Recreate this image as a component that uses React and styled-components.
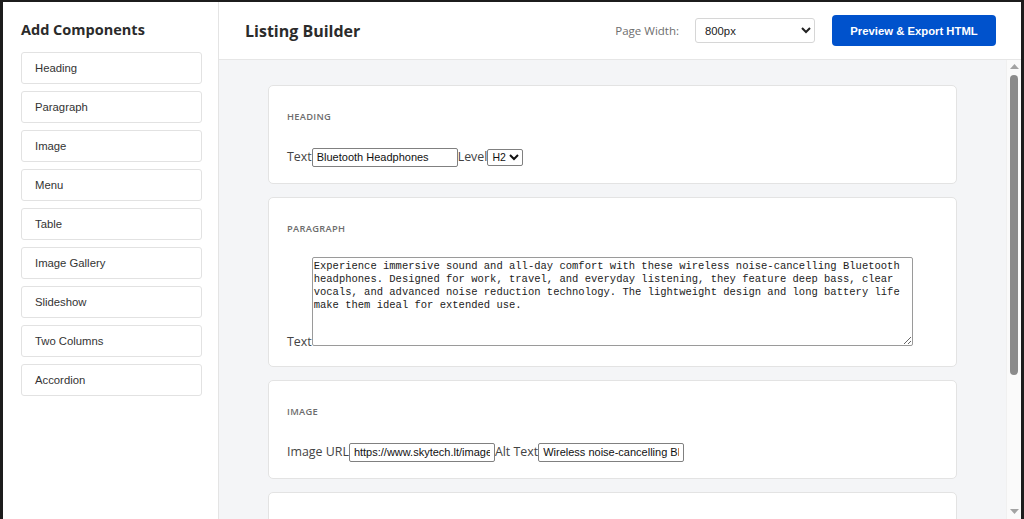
import { createGlobalStyle, styled } from "styled-components";

const GlobalStyle = createGlobalStyle`
    html, body {
        margin: 0;
        height: 100%;
        overflow: hidden;
        background: #1c1c1c;
    }
    #root {
        height: 100%;
    }
`;

const components = [
    "Heading",
    "Paragraph",
    "Image",
    "Menu",
    "Table",
    "Image Gallery",
    "Slideshow",
    "Two Columns",
    "Accordion",
];

const paragraph =
    "Experience immersive sound and all-day comfort with these wireless noise-cancelling Bluetooth headphones. Designed for work, travel, and everyday listening, they feature deep bass, clear vocals, and advanced noise reduction technology. The lightweight design and long battery life make them ideal for extended use.";

const Arrow = ({ down }) => (
    <svg width="9" height="5" viewBox="0 0 9 5">
        <path d={down ? "M0 0 L9 0 L4.5 5 Z" : "M0 5 L9 5 L4.5 0 Z"} fill="#a3a3a3" />
    </svg>
);

const App = () => {
    return (
        <>
            <GlobalStyle />
            <Shell>
                <Sidebar>
                    <SideTitle>Add Components</SideTitle>
                    <ComponentList>
                        {components.map((name) => (
                            <AddButton key={name}>{name}</AddButton>
                        ))}
                    </ComponentList>
                </Sidebar>

                <Main>
                    <Header>
                        <Title>Listing Builder</Title>
                        <Controls>
                            <WidthLabel>Page Width:</WidthLabel>
                            <WidthSelect defaultValue="800">
                                <option value="600">600px</option>
                                <option value="800">800px</option>
                                <option value="1000">1000px</option>
                            </WidthSelect>
                            <ExportButton>Preview &amp; Export HTML</ExportButton>
                        </Controls>
                    </Header>

                    <Canvas>
                        <ScrollArea>
                            <Stack>
                                <Card>
                                    <CardLabel>Heading</CardLabel>
                                    <Row>
                                        Text
                                        <Field defaultValue="Bluetooth Headphones" />
                                        Level
                                        <SmallSelect defaultValue="h2">
                                            <option value="h1">H1</option>
                                            <option value="h2">H2</option>
                                            <option value="h3">H3</option>
                                        </SmallSelect>
                                    </Row>
                                </Card>

                                <Card>
                                    <CardLabel>Paragraph</CardLabel>
                                    <Row $tight>
                                        Text
                                        <TextBox defaultValue={paragraph} />
                                    </Row>
                                </Card>

                                <Card>
                                    <CardLabel>Image</CardLabel>
                                    <Row>
                                        Image URL
                                        <Field defaultValue="https://www.skytech.lt/images/headphones.jpg" />
                                        Alt Text
                                        <Field defaultValue="Wireless noise-cancelling Bluetooth headphones" />
                                    </Row>
                                </Card>

                                <Card>
                                    <CardLabel>Menu</CardLabel>
                                    <Row>
                                        Label
                                        <Field defaultValue="Home" />
                                        Link
                                        <Field defaultValue="https://www.skytech.lt/" />
                                    </Row>
                                </Card>
                            </Stack>
                        </ScrollArea>

                        <ScrollTrack>
                            <Arrow />
                            <Thumb />
                            <Arrow down />
                        </ScrollTrack>
                    </Canvas>
                </Main>
            </Shell>
        </>
    );
};

const Shell = styled.div`
    display: flex;
    height: calc(100% - 2px);
    margin: 2px 3px 0 3px;
    background: #ffffff;
    font-family: "Open Sans", "Noto Sans", sans-serif;
    color: #333333;
`;

const Sidebar = styled.aside`
    width: 216px;
    flex-shrink: 0;
    border-right: 1px solid #e4e4e4;
    padding: 18px 18px 0 18px;
    box-sizing: border-box;
`;

const SideTitle = styled.h2`
    margin: 0 0 12px;
    font-size: 14.5px;
    line-height: 20px;
    font-weight: 700;
    color: #2b2b2b;
`;

const ComponentList = styled.div`
    display: flex;
    flex-direction: column;
    gap: 7px;
`;

const AddButton = styled.button`
    width: 181px;
    height: 32px;
    padding: 0 13px;
    text-align: left;
    background: #ffffff;
    border: 1px solid #e2e2e2;
    border-radius: 3px;
    font-family: "Liberation Sans", Arial, sans-serif;
    font-size: 11.3px;
    color: #333333;
    cursor: pointer;
`;

const Main = styled.div`
    flex: 1;
    display: flex;
    flex-direction: column;
    min-width: 0;
`;

const Header = styled.header`
    height: 57px;
    flex-shrink: 0;
    display: flex;
    align-items: center;
    justify-content: space-between;
    padding: 0 25px 0 26px;
    border-bottom: 1px solid #e6e6e6;
    background: #ffffff;
`;

const Title = styled.h1`
    margin: 0;
    font-size: 16px;
    font-weight: 700;
    color: #2b2b2b;
`;

const Controls = styled.div`
    display: flex;
    align-items: center;
`;

const WidthLabel = styled.span`
    font-size: 11.5px;
    color: #6e6e6e;
    margin-right: 16px;
    margin-left: -3px;
`;

const WidthSelect = styled.select`
    width: 120px;
    height: 25px;
    padding: 0 5px;
    border: 1px solid #d6d6d6;
    border-radius: 3px;
    background: #ffffff;
    font-family: "Liberation Sans", Arial, sans-serif;
    font-size: 11.3px;
    color: #222222;
    margin-right: 17px;
`;

const ExportButton = styled.button`
    width: 164px;
    height: 31px;
    border: none;
    border-radius: 4px;
    background: #0052cc;
    color: #ffffff;
    font-family: "Liberation Sans", Arial, sans-serif;
    font-size: 11.3px;
    font-weight: 700;
    cursor: pointer;
`;

const Canvas = styled.div`
    flex: 1;
    min-height: 0;
    display: flex;
    background: #f4f5f7;
`;

const ScrollArea = styled.div`
    flex: 1;
    min-width: 0;
    overflow: hidden;
    padding: 25px 0;
`;

const ScrollTrack = styled.div`
    width: 15px;
    flex-shrink: 0;
    display: flex;
    flex-direction: column;
    align-items: center;
    padding: 4px 0 5px;
    box-sizing: border-box;
    background: #fafafa;
    border-left: 1px solid #f0f0f0;
`;

const Thumb = styled.div`
    width: 8px;
    height: 300px;
    margin: 6px 0 auto;
    border-radius: 4px;
    background: #8b8b8b;
`;

const Stack = styled.div`
    width: 689px;
    margin: 0 auto;
    display: flex;
    flex-direction: column;
    gap: 13px;
`;

const Card = styled.section`
    background: #ffffff;
    border: 1px solid #e3e3e3;
    border-radius: 5px;
    padding: 23px 18px 15px;
`;

const CardLabel = styled.div`
    font-size: 9.3px;
    line-height: 16px;
    font-weight: 600;
    letter-spacing: 0.3px;
    text-transform: uppercase;
    color: #6d6d6d;
    margin-bottom: 20px;
`;

const Row = styled.div`
    font-size: 12.4px;
    line-height: ${(p) => (p.$tight ? "19px" : "23px")};
    color: #444444;
`;

const Field = styled.input`
    width: 146px;
    height: 19px;
    box-sizing: border-box;
    padding: 0 4px;
    margin: 0;
    border: 1px solid #808080;
    border-radius: 2px;
    font-family: "Liberation Sans", Arial, sans-serif;
    font-size: 11px;
    color: #111111;
    vertical-align: baseline;
`;

const SmallSelect = styled.select`
    height: 17px;
    padding: 0;
    margin: 0;
    border: 1px solid #808080;
    border-radius: 2px;
    background: #ffffff;
    font-family: "Liberation Sans", Arial, sans-serif;
    font-size: 10.5px;
    color: #111111;
`;

const TextBox = styled.textarea`
    width: 601px;
    height: 89px;
    box-sizing: border-box;
    padding: 2px 1px;
    margin: 0;
    border: 1px solid #9a9a9a;
    border-radius: 2px;
    font-family: "Liberation Mono", "DejaVu Sans Mono", monospace;
    font-size: 10.5px;
    line-height: 13px;
    color: #222222;
    vertical-align: baseline;
`;

export default App;
